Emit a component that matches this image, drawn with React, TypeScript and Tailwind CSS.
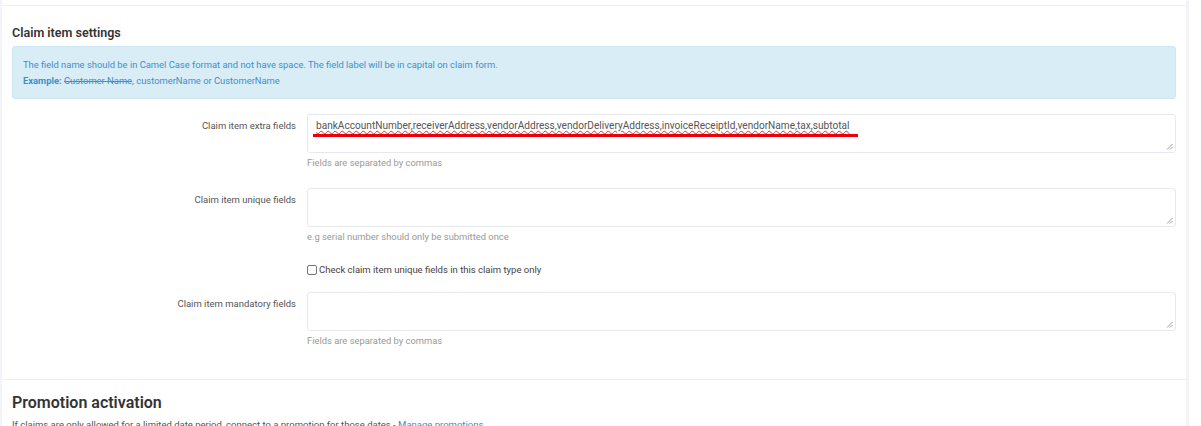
const font = { fontFamily: 'Roboto, "Liberation Sans", sans-serif' };

function Grip() {
  return (
    <svg className="absolute bottom-[2px] right-[2px]" width="7" height="7" viewBox="0 0 7 7">
      <path d="M6.5 1 L1 6.5 M6.5 4 L4 6.5" stroke="#9a9a9a" strokeWidth="1" fill="none" />
    </svg>
  );
}

function Field({
  label,
  help,
  children,
}: {
  label: string;
  help?: string;
  children?: React.ReactNode;
}) {
  return (
    <div className="flex">
      <div className="w-[284px] shrink-0 pt-[4px] text-right text-[9.5px] leading-[16px] text-[#555]">
        {label}
      </div>
      <div className="ml-[11px] flex-1">
        <div className="relative h-[39px] rounded-[3px] border border-[#e6e9f0] bg-white px-[8px] pt-[3px] text-[10.1px] leading-[16px] text-[#555]">
          {children}
          <Grip />
        </div>
        {help && <div className="mt-[2px] text-[9.4px] leading-[16px] text-[#999]">{help}</div>}
      </div>
    </div>
  );
}

export default function App() {
  return (
    <div className="flex h-[426px] w-[1201px] overflow-hidden bg-white" style={font}>
      <div className="w-[2px] shrink-0 bg-[#f3f4f9]" />
      <div className="w-[1184px] shrink-0">
        <div className="h-[6px] border-b border-[#eef0f6]" />
        <div className="px-[10px]">
          <h3 className="mt-[18px] text-[12.5px] font-semibold leading-[18px] text-[#333]">Claim item settings</h3>
          <div className="mt-[4px] h-[53px] rounded-[3px] border border-[#cde8f3] bg-[#d9edf7] px-[10px] pt-[10px] text-[9.4px] leading-[16px] text-[#3c8fcb]">
            <div>
              The field name should be in Camel Case format and not have space. The field label will be in capital on claim form.
            </div>
            <div>
              <span className="font-bold">Example:</span> <span className="line-through">Customer Name</span>, customerName or CustomerName
            </div>
          </div>

          <div className="mt-[15px]">
            <Field label="Claim item extra fields" help="Fields are separated by commas">
              <span className="underline decoration-[#e0302a] decoration-wavy decoration-[1px] underline-offset-[1px]">
                bankAccountNumber,receiverAddress,vendorAddress,vendorDeliveryAddress,invoiceReceiptId,vendorName,tax,subtotal
              </span>
              <div className="absolute left-[5px] top-[19px] h-[3px] w-[545px] bg-[#e8000b]" />
            </Field>
          </div>

          <div className="mt-[17px]">
            <Field label="Claim item unique fields" help="e.g serial number should only be submitted once" />
          </div>

          <div className="mt-[17px] flex items-center pl-[295px] text-[9.5px] leading-[16px] text-[#444]">
            <span className="mr-[2px] inline-block h-[10px] w-[10px] rounded-[2px] border border-[#777] bg-white" />
            Check claim item unique fields in this claim type only
          </div>

          <div className="mt-[14px]">
            <Field label="Claim item mandatory fields" help="Fields are separated by commas" />
          </div>
        </div>

        <div className="mt-[30px] border-t border-[#eef0f6] px-[10px]">
          <h2 className="mt-[12px] text-[16px] font-semibold leading-[22px] text-[#333]">Promotion activation</h2>
          <p className="mt-[3px] text-[9.5px] leading-[16px] text-[#555]">
            If claims are only allowed for a limited date period, connect to a promotion for those dates -{' '}
            <span className="text-[#3c8fcb]">Manage promotions</span>
          </p>
        </div>
      </div>
      <div className="w-[3px] shrink-0 bg-[#f3f4f9]" />
      <div className="flex-1 bg-white" />
    </div>
  );
}
